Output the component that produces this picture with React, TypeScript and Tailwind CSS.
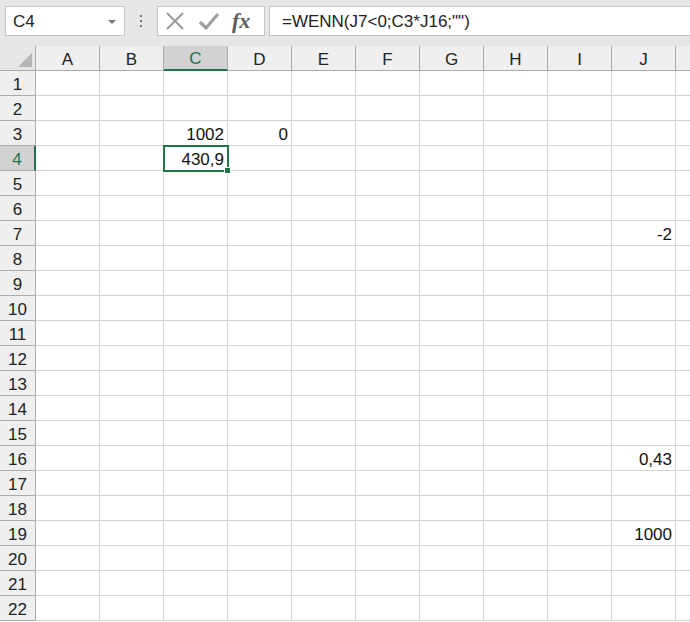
import React from 'react'

const cols = ['A', 'B', 'C', 'D', 'E', 'F', 'G', 'H', 'I', 'J']

// values by row number -> column letter
const data: Record<number, Record<string, string>> = {
  3: { C: '1002', D: '0' },
  4: { C: '430,9' },
  7: { J: '-2' },
  16: { J: '0,43' },
  19: { J: '1000' },
}

const font = { fontFamily: '"Liberation Sans", Arial, sans-serif' }

function Toolbar() {
  return (
    <div className="flex h-[46px] items-start bg-[#e6e6e6] pt-[6px]">
      <div className="ml-[5px] flex h-[30px] w-[120px] items-center justify-between border border-[#c6c6c6] bg-white pl-[7px] pr-[8px] pt-[2px] text-[17px] text-[#222]">
        <span>C4</span>
        <span className="h-0 w-0 border-x-[4px] border-t-[4px] border-x-transparent border-t-[#777]" />
      </div>
      <div className="flex h-[30px] w-[32px] flex-col items-center justify-center gap-[3px]">
        <span className="h-[2px] w-[2px] bg-[#777]" />
        <span className="h-[2px] w-[2px] bg-[#777]" />
        <span className="h-[2px] w-[2px] bg-[#777]" />
      </div>
      <div className="flex h-[30px] w-[108px] items-center border border-[#c6c6c6] bg-white">
        <svg width="22" height="22" viewBox="0 0 22 22" className="ml-[6px]">
          <path d="M3 3 L19 19 M19 3 L3 19" stroke="#9a9a9a" strokeWidth="2" fill="none" />
        </svg>
        <svg width="24" height="22" viewBox="0 0 24 22" className="ml-[11px]">
          <path d="M3 12 L9 18 L21 4" stroke="#a0a0a0" strokeWidth="3.2" fill="none" />
        </svg>
        <span
          className="ml-[11px] text-[22px] font-bold italic leading-none text-[#5a5a5a]"
          style={{ fontFamily: '"Liberation Serif", "Times New Roman", serif' }}
        >
          fx
        </span>
      </div>
      <div className="ml-[4px] flex h-[30px] flex-1 items-center border border-r-0 border-[#c6c6c6] bg-white pl-[12px] pt-[2px] text-[17px] text-[#222]">
        =WENN(J7&lt;0;C3*J16;"")
      </div>
    </div>
  )
}

export default function App() {
  const rows = Array.from({ length: 22 }, (_, i) => i + 1)
  return (
    <div className="h-[622px] w-[690px] overflow-hidden bg-white" style={font}>
      <Toolbar />
      <div className="grid grid-cols-[36px_repeat(10,64px)_1fr] auto-rows-[25px]">
        {/* header row */}
        <div className="relative border-b border-r border-[#ababab] bg-[#e6e6e6]">
          <span className="absolute bottom-[3px] right-[3px] h-0 w-0 border-b-[14px] border-l-[14px] border-b-[#b5b5b5] border-l-transparent" />
        </div>
        {cols.map((c) =>
          c === 'C' ? (
            <div
              key={c}
              className="flex items-center justify-center border-b-2 border-r border-b-[#217346] border-r-[#ababab] bg-[#d2d2d2] pt-[3px] text-[17px] text-[#217346]"
            >
              {c}
            </div>
          ) : (
            <div
              key={c}
              className="flex items-center justify-center border-b border-r border-[#ababab] bg-[#efefef] pt-[3px] text-[17px] text-[#222]"
            >
              {c}
            </div>
          ),
        )}
        <div className="border-b border-[#ababab] bg-[#efefef]" />

        {rows.map((r) => (
          <React.Fragment key={r}>
            {r === 4 ? (
              <div className="flex items-center justify-center border-b border-r-2 border-b-[#ababab] border-r-[#217346] bg-[#d2d2d2] pt-[3px] text-[17px] text-[#217346]">
                {r}
              </div>
            ) : (
              <div className="flex items-center justify-center border-b border-r border-[#ababab] bg-[#efefef] pt-[3px] text-[17px] text-[#222]">
                {r}
              </div>
            )}
            {cols.map((c) => {
              const v = data[r]?.[c]
              const sel = r === 4 && c === 'C'
              return (
                <div
                  key={c}
                  className={`relative flex items-center justify-end border-b border-r border-[#d4d4d4] pr-[3px] pt-[3px] text-[17px] text-[#111] ${sel ? 'z-10' : ''}`}
                >
                  {v}
                  {sel && (
                    <>
                      <span className="pointer-events-none absolute -left-[1px] -top-[1px] h-[27px] w-[66px] border-2 border-[#217346]" />
                      <span className="absolute -bottom-[4px] -right-[4px] h-[7px] w-[7px] border border-white bg-[#217346]" />
                    </>
                  )}
                </div>
              )
            })}
            <div className="border-b border-[#d4d4d4]" />
          </React.Fragment>
        ))}
      </div>
    </div>
  )
}
